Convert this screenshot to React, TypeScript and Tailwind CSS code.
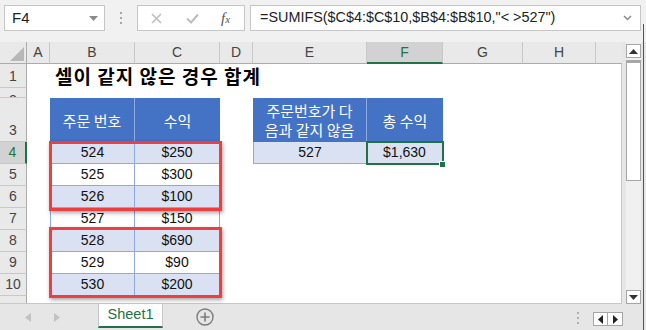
import React from 'react';

const rows: [string, string, boolean][] = [
  ['524', '$250', true],
  ['525', '$300', false],
  ['526', '$100', true],
  ['527', '$150', false],
  ['528', '$690', true],
  ['529', '$90', false],
  ['530', '$200', true],
];

const letters = ['A', 'B', 'C', 'D', 'E', 'F', 'G', 'H'];

function RowHead({ n, active, top }: { n: string; active?: boolean; top?: boolean }) {
  return (
    <div
      className={
        'flex justify-center overflow-hidden border-b text-[14px] leading-[16px] ' +
        (top ? 'items-start pt-[4px] ' : 'items-end pb-[3px] ') +
        (active
          ? 'bg-[#d2d2d2] text-[#217346] border-b-[#c8c8c8] border-r-2 border-r-[#217346]'
          : 'bg-[#e9e9e9] text-[#444] border-b-[#c8c8c8] border-r border-r-[#ababab]')
      }
    >
      {n}
    </div>
  );
}

function Blank({ n }: { n: number }) {
  return (
    <>
      {Array.from({ length: n }).map((_, i) => (
        <div key={i} />
      ))}
    </>
  );
}

function TopBar() {
  return (
    <div className="h-[42px] shrink-0 flex items-start pt-[5px] pl-[4px] bg-[#f1f1f1]">
      <div className="w-[101px] h-[26px] bg-white border border-[#c6c6c6] flex items-center justify-between pl-[7px] pr-[6px] text-[15px] text-[#222]">
        <span>F4</span>
        <svg width="9" height="5" viewBox="0 0 9 5">
          <path d="M0 0h9L4.5 5z" fill="#8a8a8a" />
        </svg>
      </div>
      <div className="w-[32px] h-[26px] flex flex-col items-center justify-center gap-[3px]">
        <span className="w-[2px] h-[2px] bg-[#a6a6a6]" />
        <span className="w-[2px] h-[2px] bg-[#a6a6a6]" />
        <span className="w-[2px] h-[2px] bg-[#a6a6a6]" />
      </div>
      <div className="w-[108px] h-[26px] bg-white border border-[#c6c6c6] flex items-center pl-[13px]">
        <svg width="11" height="11" viewBox="0 0 11 11">
          <path d="M1 1l9 9M10 1l-9 9" stroke="#bdbdbd" strokeWidth="1.6" />
        </svg>
        <svg className="ml-[24px]" width="13" height="11" viewBox="0 0 13 11">
          <path d="M1 5.5l4 4 7-8" stroke="#bdbdbd" strokeWidth="2" fill="none" />
        </svg>
        <span className="ml-[22px] font-['Liberation_Serif',serif] italic text-[15px] text-[#555] leading-none">
          f<span className="text-[11px]">x</span>
        </span>
      </div>
      <div className="ml-[5px] w-[391px] h-[26px] bg-white border border-[#c6c6c6] flex items-center justify-between pl-[9px] pr-[8px] text-[14.4px] text-[#222]">
        <span>=SUMIFS($C$4:$C$10,$B$4:$B$10,"&lt; &gt;527")</span>
        <svg width="9" height="6" viewBox="0 0 9 6">
          <path d="M1 1l3.5 3.5L8 1" stroke="#8a8a8a" strokeWidth="1.5" fill="none" />
        </svg>
      </div>
    </div>
  );
}

function Sheet() {
  const blueHead =
    "bg-[#4472c4] text-white flex items-center justify-center text-center font-['Noto_Sans_CJK_KR',sans-serif] text-[15px] leading-[19px]";
  return (
    <div className="relative w-[622px] h-[262px] bg-white border-r border-b border-[#c6c6c6] grid grid-cols-[27px_23px_85px_85px_33px_114px_76px_80px_73px_26px] grid-rows-[22px_24px_10px_44px_22px_22px_22px_22px_22px_22px_22px_8px] text-[14px] text-[#111]">
      {/* header row */}
      <div className="bg-[#e9e9e9] border-b border-r border-[#ababab] flex items-end justify-end pr-[2px] pb-[2px]">
        <svg width="14" height="14" viewBox="0 0 14 14">
          <path d="M14 0v14H0z" fill="#b7b7b7" />
        </svg>
      </div>
      {letters.map((l) =>
        l === 'F' ? (
          <div
            key={l}
            className="bg-[#d2d2d2] text-[#217346] border-r border-r-[#c8c8c8] border-b-2 border-b-[#217346] flex items-center justify-center"
          >
            {l}
          </div>
        ) : (
          <div
            key={l}
            className="bg-[#e9e9e9] text-[#444] border-r border-r-[#c8c8c8] border-b border-b-[#ababab] flex items-center justify-center"
          >
            {l}
          </div>
        )
      )}
      <div className="bg-[#e9e9e9] border-b border-[#ababab]" />

      {/* row 1 */}
      <RowHead n="1" />
      <div />
      <div className="relative z-10 whitespace-nowrap pl-[5px] flex items-center font-['Noto_Sans_CJK_KR',sans-serif] font-bold text-[19px] tracking-[1px] leading-[22px] text-black">
        셀이 같지 않은 경우 합계
      </div>
      <Blank n={7} />

      {/* row 2 */}
      <RowHead n="2" top />
      <Blank n={9} />

      {/* row 3 */}
      <RowHead n="3" />
      <div />
      <div className={blueHead + ' border-r border-[#8ea9db]'}>주문 번호</div>
      <div className={blueHead}>수익</div>
      <div />
      <div className={blueHead + ' border-r border-[#8ea9db]'}>
        주문번호가 다<br />음과 같지 않음
      </div>
      <div className={blueHead}>총 수익</div>
      <Blank n={3} />

      {/* rows 4-10 */}
      {rows.map(([b, c, fill], i) => {
        const bg = fill ? 'bg-[#d9e1f2]' : 'bg-white';
        return (
          <React.Fragment key={b}>
            <RowHead n={String(i + 4)} active={i === 0} />
            <div />
            <div className={bg + ' border-l border-r border-b border-[#8ea9db] flex items-center justify-center'}>{b}</div>
            <div className={bg + ' border-r border-b border-[#8ea9db] flex items-center justify-center'}>{c}</div>
            <div />
            {i === 0 ? (
              <>
                <div className="bg-[#d9e1f2] border-l border-r border-b border-[#8ea9db] flex items-center justify-center">527</div>
                <div className="bg-[#d9e1f2] border-r border-b border-[#8ea9db] flex items-center justify-center">$1,630</div>
              </>
            ) : (
              <Blank n={2} />
            )}
            <Blank n={3} />
          </React.Fragment>
        );
      })}

      {/* row 11 */}
      <RowHead n="11" top />
      <Blank n={9} />

      {/* highlights */}
      <div className="absolute left-[49px] top-[99px] w-[173px] h-[70px] border-[3px] border-[#ee3e3e] shadow-[1px_2px_4px_rgba(0,0,0,0.35)]" />
      <div className="absolute left-[49px] top-[185px] w-[173px] h-[71px] border-[3px] border-[#ee3e3e] shadow-[1px_2px_4px_rgba(0,0,0,0.35)]" />
      <div className="absolute left-[366px] top-[99px] w-[78px] h-[24px] border-2 border-[#217346]" />
      <div className="absolute left-[439px] top-[119px] w-[7px] h-[7px] bg-[#217346] border border-white" />
    </div>
  );
}

function VScroll() {
  return (
    <div className="w-[24px] h-[262px] bg-[#e6e6e6] flex">
      <div className="ml-[4px] w-[15px] h-full bg-[#f0f0f0] flex flex-col">
        <div className="mt-[2px] h-[14px] bg-white border border-[#a6a6a6] flex items-center justify-center">
          <svg width="9" height="5" viewBox="0 0 9 5">
            <path d="M0 5h9L4.5 0z" fill="#333" />
          </svg>
        </div>
        <div className="mt-[2px] h-[121px] bg-white border border-[#a6a6a6] border-t-[3px] border-t-[#a6a6a6]" />
        <div className="flex-1" />
        <div className="h-[14px] bg-white border border-[#a6a6a6] flex items-center justify-center">
          <svg width="9" height="5" viewBox="0 0 9 5">
            <path d="M0 0h9L4.5 5z" fill="#333" />
          </svg>
        </div>
      </div>
    </div>
  );
}

function TabBar() {
  return (
    <div className="h-[26px] shrink-0 bg-[#e6e6e6] flex items-start">
      <svg className="ml-[25px] mt-[9px]" width="6" height="9" viewBox="0 0 6 9">
        <path d="M6 0v9L0 4.5z" fill="#c2c2c2" />
      </svg>
      <svg className="ml-[23px] mt-[9px]" width="6" height="9" viewBox="0 0 6 9">
        <path d="M0 0v9l6-4.5z" fill="#c2c2c2" />
      </svg>
      <div className="ml-[38px] w-[65px] h-[24px] bg-white border-l border-r border-[#c6c6c6] border-b-[2px] border-b-[#217346] flex items-center justify-center text-[14.5px] text-[#217346]">
        Sheet1
      </div>
      <svg className="ml-[33px] mt-[4px]" width="18" height="18" viewBox="0 0 18 18">
        <circle cx="9" cy="9" r="8" fill="none" stroke="#7c7c7c" strokeWidth="1.4" />
        <path d="M9 4.5v9M4.5 9h9" stroke="#7c7c7c" strokeWidth="1.6" />
      </svg>
      <div className="flex-1" />
      <div className="mt-[8px] flex flex-col gap-[3px]">
        <span className="w-[2px] h-[2px] bg-[#b0b0b0]" />
        <span className="w-[2px] h-[2px] bg-[#b0b0b0]" />
        <span className="w-[2px] h-[2px] bg-[#b0b0b0]" />
      </div>
      <div className="ml-[14px] mt-[8px] flex">
        <div className="w-[15px] h-[14px] bg-white border border-[#a6a6a6] flex items-center justify-center">
          <svg width="5" height="9" viewBox="0 0 5 9">
            <path d="M5 0v9L0 4.5z" fill="#222" />
          </svg>
        </div>
        <div className="w-[15px] h-[14px] bg-white border border-l-0 border-[#a6a6a6] flex items-center justify-center">
          <svg width="5" height="9" viewBox="0 0 5 9">
            <path d="M0 0v9l5-4.5z" fill="#222" />
          </svg>
        </div>
      </div>
      <div className="w-[23px]" />
    </div>
  );
}

export default function App() {
  return (
    <div className="relative w-[646px] h-[330px] overflow-hidden bg-[#e6e6e6] flex flex-col font-['Liberation_Sans','Noto_Sans_CJK_KR',sans-serif]">
      <TopBar />
      <div className="flex h-[262px]">
        <Sheet />
        <VScroll />
      </div>
      <TabBar />
      {/* window edge */}
      <div className="absolute right-[2px] top-[24px] bottom-0 w-[1px] bg-[#217346]" />
    </div>
  );
}
